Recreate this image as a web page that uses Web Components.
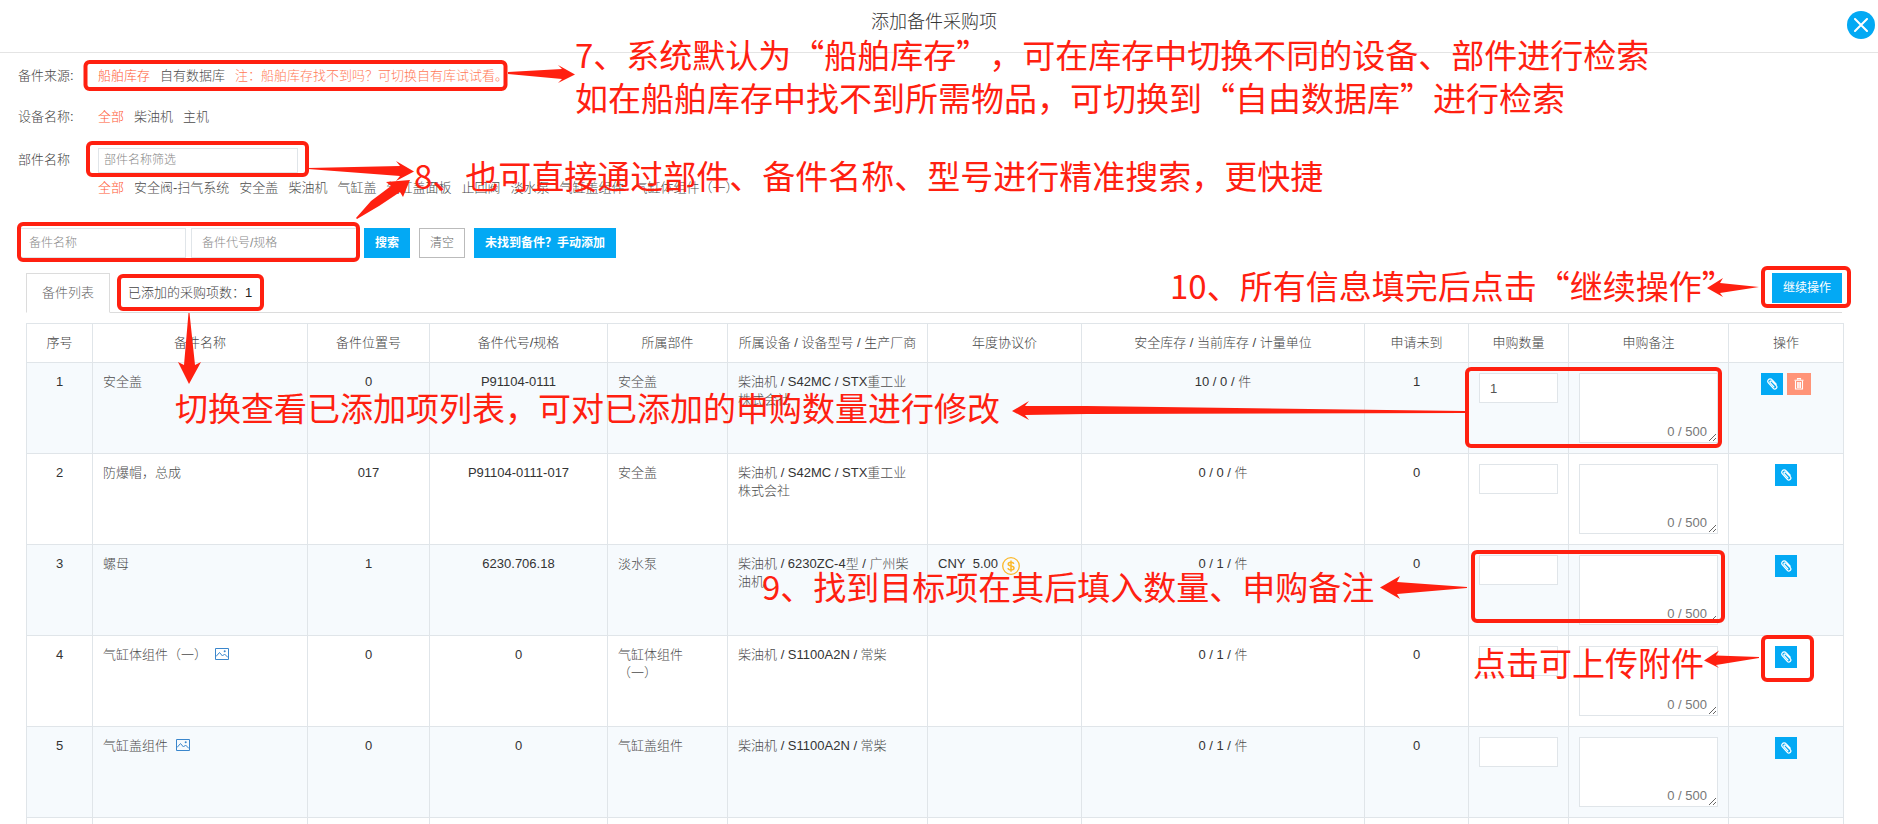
<!DOCTYPE html>
<html lang="zh-CN">
<head>
<meta charset="utf-8">
<title>添加备件采购项</title>
<style>
body{margin:0;background:#fff;overflow:hidden;font:13px/18px "Liberation Sans","Noto Sans CJK SC",sans-serif;color:#333;font-weight:300;text-spacing-trim:space-all}
</style>
</head>
<body>
<purchase-dialog></purchase-dialog>
<script>
const make=(name,html,setup)=>{
  const tpl=document.createElement('template');
  tpl.innerHTML=html;
  customElements.define(name,class extends HTMLElement{
    constructor(){super();this.attachShadow({mode:'open'}).append(tpl.content.cloneNode(true));}
    connectedCallback(){if(setup&&!this.ready){this.ready=true;setup(this,this.shadowRoot);}}
  });
};

make('dialog-header',`
<style>
:host{display:flex;align-items:center;justify-content:center;position:relative;height:53px;padding:0 10px 8px 0;box-sizing:border-box;border-bottom:1px solid #e4e4e4}
h1{margin:0;font:inherit;font-size:18px;line-height:24px;color:#333}
button{position:absolute;right:3px;top:11px;width:28px;height:28px;border:0;border-radius:50%;padding:0;background:#03a9f4;display:grid;place-items:center}
</style>
<h1><slot></slot></h1>
<button aria-label="关闭"><svg width="14" height="14" viewBox="0 0 14 14"><path d="M1 1l12 12M13 1L1 13" stroke="#fff" stroke-width="2" fill="none" stroke-linecap="round"/></svg></button>
`);

make('filter-row',`
<style>
:host{display:flex;align-items:center;min-height:24px}
.label{flex:none;width:80px;color:#444}
.items{display:flex;flex-wrap:wrap;gap:0 10px;align-items:center}
</style>
<span class="label"></span><div class="items"><slot></slot></div>
`,(el,r)=>{r.querySelector('.label').textContent=el.getAttribute('label')||'';});

make('filter-option',`
<style>
:host{display:block}
a{color:#4c4c4c;text-decoration:none;white-space:nowrap}
:host([active]) a{color:#ff5a36}
</style>
<a href="#"><slot></slot></a>
`);

make('text-field',`
<style>
:host{display:block}
input{box-sizing:border-box;display:block;width:100%;height:var(--field-height,30px);border:1px solid #e0e5e9;background:#fff;padding:0 var(--field-pad,10px);font:inherit;font-size:var(--field-size,12px);color:#555;outline:0;border-radius:0}
input::placeholder{color:#888}
</style>
<input type="text">
`,(el,r)=>{
  const i=r.querySelector('input');
  i.placeholder=el.getAttribute('placeholder')||'';
  i.value=el.getAttribute('value')||'';
  i.setAttribute('aria-label',el.getAttribute('label')||i.placeholder);
});

make('action-button',`
<style>
:host{display:block}
button{display:block;box-sizing:border-box;height:30px;padding:0 11px;border:0;background:#03a9f4;color:#fff;font:inherit;font-size:12px;font-weight:var(--btn-weight,700);white-space:nowrap}
:host([plain]) button{background:#fff;border:1px solid #bbb;padding:0 10px;color:#666;font-weight:300}
</style>
<button><slot></slot></button>
`);

make('icon-button',`
<style>
:host{display:block}
button{display:grid;place-items:center;width:22px;height:22px;padding:0;border:0;background:#03a9f4}
:host([kind=trash]) button{width:24px;background:#ff9478}
</style>
<button></button>
`,(el,r)=>{
  const b=r.querySelector('button');
  if(el.getAttribute('kind')==='trash'){
    b.setAttribute('aria-label','删除');
    b.innerHTML='<svg width="10" height="12" viewBox="0 0 10 12"><path d="M3.500 1.500V.6h3v.9M.5 2.200h9M1.500 3v8h7V3M3.700 4v6M5 4v6M6.400 4v6" fill="none" stroke="#fff" stroke-width="1.100"/></svg>';
  }else{
    b.setAttribute('aria-label','上传附件');
    b.innerHTML='<svg width="12" height="12" viewBox="0 0 12 12"><path d="M10.200 6.200L6 1.700a2.400 2.400 0 0 0-3.700.1 2.400 2.400 0 0 0 .1 3.100l4.900 5.400a2 2 0 0 0 3-2.700L6 3.300a1.100 1.100 0 0 0-1.700 1.500l3.600 4" fill="none" stroke="#fff" stroke-width="1.200" stroke-linecap="round"/></svg>';
  }
});

make('note-area',`
<style>
:host{display:block;position:relative}
textarea{box-sizing:border-box;display:block;width:100%;height:70px;border:1px solid #e0e5e9;background:#fff;padding:6px 10px;font:inherit;outline:0;resize:vertical;border-radius:0}
span{position:absolute;right:11px;bottom:2px;color:#777;pointer-events:none}
</style>
<textarea aria-label="申购备注"></textarea><span>0 / 500</span>
`);

make('tab-bar',`
<style>
:host{display:flex;align-items:flex-end;height:40px;border-bottom:1px solid #dcdcdc;box-sizing:border-box}
.tab,.count{font:inherit;background:#fff;box-sizing:border-box;height:40px;white-space:nowrap}
.tab{border:1px solid #dcdcdc;border-bottom-color:#fff;padding:0 15px;width:84px;margin-bottom:-1px;color:#666}
.count{border:0;padding:0 18px;color:#444;height:39px}
b{color:#222;font-weight:400}
.end{margin-left:auto;align-self:flex-start}
</style>
<button class="tab">备件列表</button><button class="count">已添加的采购项数：<b>1</b></button>
<div class="end"><slot></slot></div>
`);

const picture='<svg class="pic" width="14" height="12" viewBox="0 0 14 12"><path d="M.5.5h13v11H.5zM1 8.500l3.500-4 3 3.500 2-2 3.500 3.500" fill="none" stroke="#3a86cc"/><circle cx="9.700" cy="3.300" r="1" fill="#3a86cc"/></svg>';
const coin='<svg class="coin" width="18" height="18" viewBox="0 0 18 18"><circle cx="9" cy="9" r="8.300" fill="none" stroke="#fbb92c" stroke-width="1.300"/><path d="M11.800 6.900C11.500 5.700 10.400 5.200 9 5.200c-1.700 0-2.800.7-2.800 1.900 0 2.700 5.800 1.300 5.800 4 0 1.300-1.200 2-3 2-1.600 0-2.800-.6-3.100-1.900M9 3.500v11.200" fill="none" stroke="#fbb92c" stroke-width="1.500"/></svg>';
const rows=[
 ['安全盖','','0','P91104-0111','安全盖','柴油机 / S42MC / STX重工业株式会社','','10 / 0 / 件','1','1'],
 ['防爆帽，总成','','017','P91104-0111-017','安全盖','柴油机 / S42MC / STX重工业株式会社','','0 / 0 / 件','0',''],
 ['螺母','','1','6230.706.18','淡水泵','柴油机 / 6230ZC-4型 / 广州柴油机','CNY&nbsp; 5.00 '+coin,'0 / 1 / 件','0',''],
 ['气缸体组件（一）',picture,'0','0','气缸体组件（一）','柴油机 / S1100A2N / 常柴','','0 / 1 / 件','0',''],
 ['气缸盖组件',picture,'0','0','气缸盖组件','柴油机 / S1100A2N / 常柴','','0 / 1 / 件','0','']
];
make('parts-table',`
<style>
:host{display:block}
table{width:100%;border-collapse:collapse;table-layout:fixed}
th,td{border:1px solid #e0e5e9;padding:10px;font-weight:300;vertical-align:top;text-align:left;height:70px}
th{height:18px;text-align:center;color:#444;vertical-align:middle;white-space:nowrap;padding:10px 0}
.c{text-align:center}
tbody tr:nth-child(odd){background:#f6fafd}
text-field{--field-size:13px}
.ops{display:flex;justify-content:center;gap:4px}
.cjk{color:#4c4c4c}
.pic{margin-left:8px;vertical-align:-1px}
.coin{vertical-align:-5px;margin:-2px 0}
</style>
<table><colgroup></colgroup><thead><tr></tr></thead><tbody></tbody></table>
`,(el,r)=>{
  const widths=[66,215,122,178,120,200,154,283,104,100,160,115];
  const heads=['序号','备件名称','备件位置号','备件代号/规格','所属部件','所属设备 / 设备型号 / 生产厂商','年度协议价','安全库存 / 当前库存 / 计量单位','申请未到','申购数量','申购备注','操作'];
  const tint=t=>t.replace(/[\u3000-\u9fff\uff00-\uffef]+/g,'<span class="cjk">$&</span>');
  r.querySelector('colgroup').innerHTML=widths.map(w=>`<col style="width:${w}px">`).join('');
  r.querySelector('thead tr').innerHTML=heads.map(h=>`<th scope="col">${h}</th>`).join('');
  r.querySelector('tbody').innerHTML=rows.map(([name,pic,pos,code,part,dev,price,stock,due,qty],i)=>`<tr>
<td class="c">${i+1}</td><td>${tint(name)}${pic}</td><td class="c">${pos}</td><td class="c">${code}</td><td>${tint(part)}</td><td>${tint(dev)}</td><td>${price}</td><td class="c">${tint(stock)}</td><td class="c">${due}</td>
<td><text-field label="申购数量" value="${qty}"></text-field></td><td><note-area></note-area></td>
<td><div class="ops"><icon-button kind="clip"></icon-button>${i===0?'<icon-button kind="trash"></icon-button>':''}</div></td></tr>`).join('')+`<tr>${'<td></td>'.repeat(12)}</tr>`;
});

make('guide-note',`
<style>
:host{position:absolute;font:400 33px/43px "Noto Sans CJK SC",sans-serif;color:#ff2010;white-space:nowrap}
</style><slot></slot>
`);

make('guide-layer',`
<style>
:host{position:absolute;inset:0;pointer-events:none;overflow:hidden}
svg{position:absolute;left:0;top:0}
</style>
<svg width="1878" height="824" viewBox="0 0 1878 824">
<g fill="none" stroke="#ff2010" stroke-width="4">
<rect x="85.500" y="62" width="420" height="27" rx="4"/>
<rect x="88" y="143" width="219" height="32" rx="4"/>
<rect x="19" y="224" width="339" height="36" rx="4"/>
<rect x="119" y="276" width="143" height="33" rx="4"/>
<rect x="1763" y="268" width="86" height="38" rx="4"/>
<rect x="1467" y="369" width="253" height="77" rx="4"/>
<rect x="1473" y="552" width="250" height="69" rx="4"/>
<rect x="1763" y="637" width="49" height="43" rx="4"/>
</g>
<g fill="#ff2010">
<path d="M508 72l54-3-4-4 17 9.500-17 8.500 4-4-54-5z"/>
<path d="M308 168l92-2-4-5 18 10.500-18 9.500 4-5-92-7z"/>
<path d="M356 218l15-17 20-15-5-4 24-2-7 17-3-5-21 14-22 13z"/>
<path d="M188.500 313h1l5.500 52 6-3-12 22-11-22 6 3z"/>
<path d="M1012 411l17-10-4 5h62l378 5v2l-378 1-62 1 4 5z"/>
<path d="M1380 587.500l20-11.500-3 6 70 5v1l-70 6 3 5z"/>
<path d="M1707 288l16-10-3 5 39 4-39 6 3 4z"/>
<path d="M1704 660.500l15-10-3 5 43 1.500v1l-43 7 3 3z"/>
</g>
</svg>
<slot></slot>
`);

make('purchase-dialog',`
<style>
:host{display:block;position:relative;height:100vh;overflow:hidden}
.filters{padding:11px 18px 0;display:grid;grid-template-rows:24px 24px 28px 20px;row-gap:17px}
.filters .tight{margin-top:-26px}
.note{color:#ff7a58}
.filters text-field{width:200px;--field-height:25px;--field-pad:5px}
.search{display:flex;gap:9px;padding:0 18px;margin-top:17px}
.fields{display:flex;gap:5px;margin-right:-4px}
.fields text-field{width:168px}
.list{padding:0 36px 0 26px;margin-top:15px}
parts-table{margin-top:10px}
.list action-button{--btn-weight:400}
</style>
<dialog-header>添加备件采购项</dialog-header>
<section class="filters">
<filter-row label="备件来源:"><filter-option active>船舶库存</filter-option><filter-option>自有数据库</filter-option><span class="note">注：船舶库存找不到吗？可切换自有库试试看。</span></filter-row>
<filter-row label="设备名称:"><filter-option active>全部</filter-option><filter-option>柴油机</filter-option><filter-option>主机</filter-option></filter-row>
<filter-row label="部件名称"><text-field placeholder="部件名称筛选"></text-field></filter-row>
<filter-row class="tight"><filter-option active>全部</filter-option><filter-option>安全阀-扫气系统</filter-option><filter-option>安全盖</filter-option><filter-option>柴油机</filter-option><filter-option>气缸盖</filter-option><filter-option>气缸盖面板</filter-option><filter-option>止回阀</filter-option><filter-option>淡水泵</filter-option><filter-option>气缸盖组件</filter-option><filter-option>气缸体组件（一）</filter-option></filter-row>
</section>
<section class="search">
<div class="fields"><text-field placeholder="备件名称"></text-field><text-field placeholder="备件代号/规格"></text-field></div>
<action-button>搜索</action-button><action-button plain>清空</action-button><action-button>未找到备件？手动添加</action-button>
</section>
<section class="list">
<tab-bar><action-button>继续操作</action-button></tab-bar>
<parts-table></parts-table>
</section>
<guide-layer>
<guide-note style="left:575px;top:33px">7、系统默认为“船舶库存”，可在库存中切换不同的设备、部件进行检索<br>如在船舶库存中找不到所需物品，可切换到“自由数据库”进行检索</guide-note>
<guide-note style="left:414px;top:154px">8、也可直接通过部件、备件名称、型号进行精准搜索，更快捷</guide-note>
<guide-note style="left:1170px;top:264px">10、所有信息填完后点击“继续操作”</guide-note>
<guide-note style="left:175px;top:386px">切换查看已添加项列表，可对已添加的申购数量进行修改</guide-note>
<guide-note style="left:762px;top:565px">9、找到目标项在其后填入数量、申购备注</guide-note>
<guide-note style="left:1473px;top:641px">点击可上传附件</guide-note>
</guide-layer>
`);
</script>
</body>
</html>
